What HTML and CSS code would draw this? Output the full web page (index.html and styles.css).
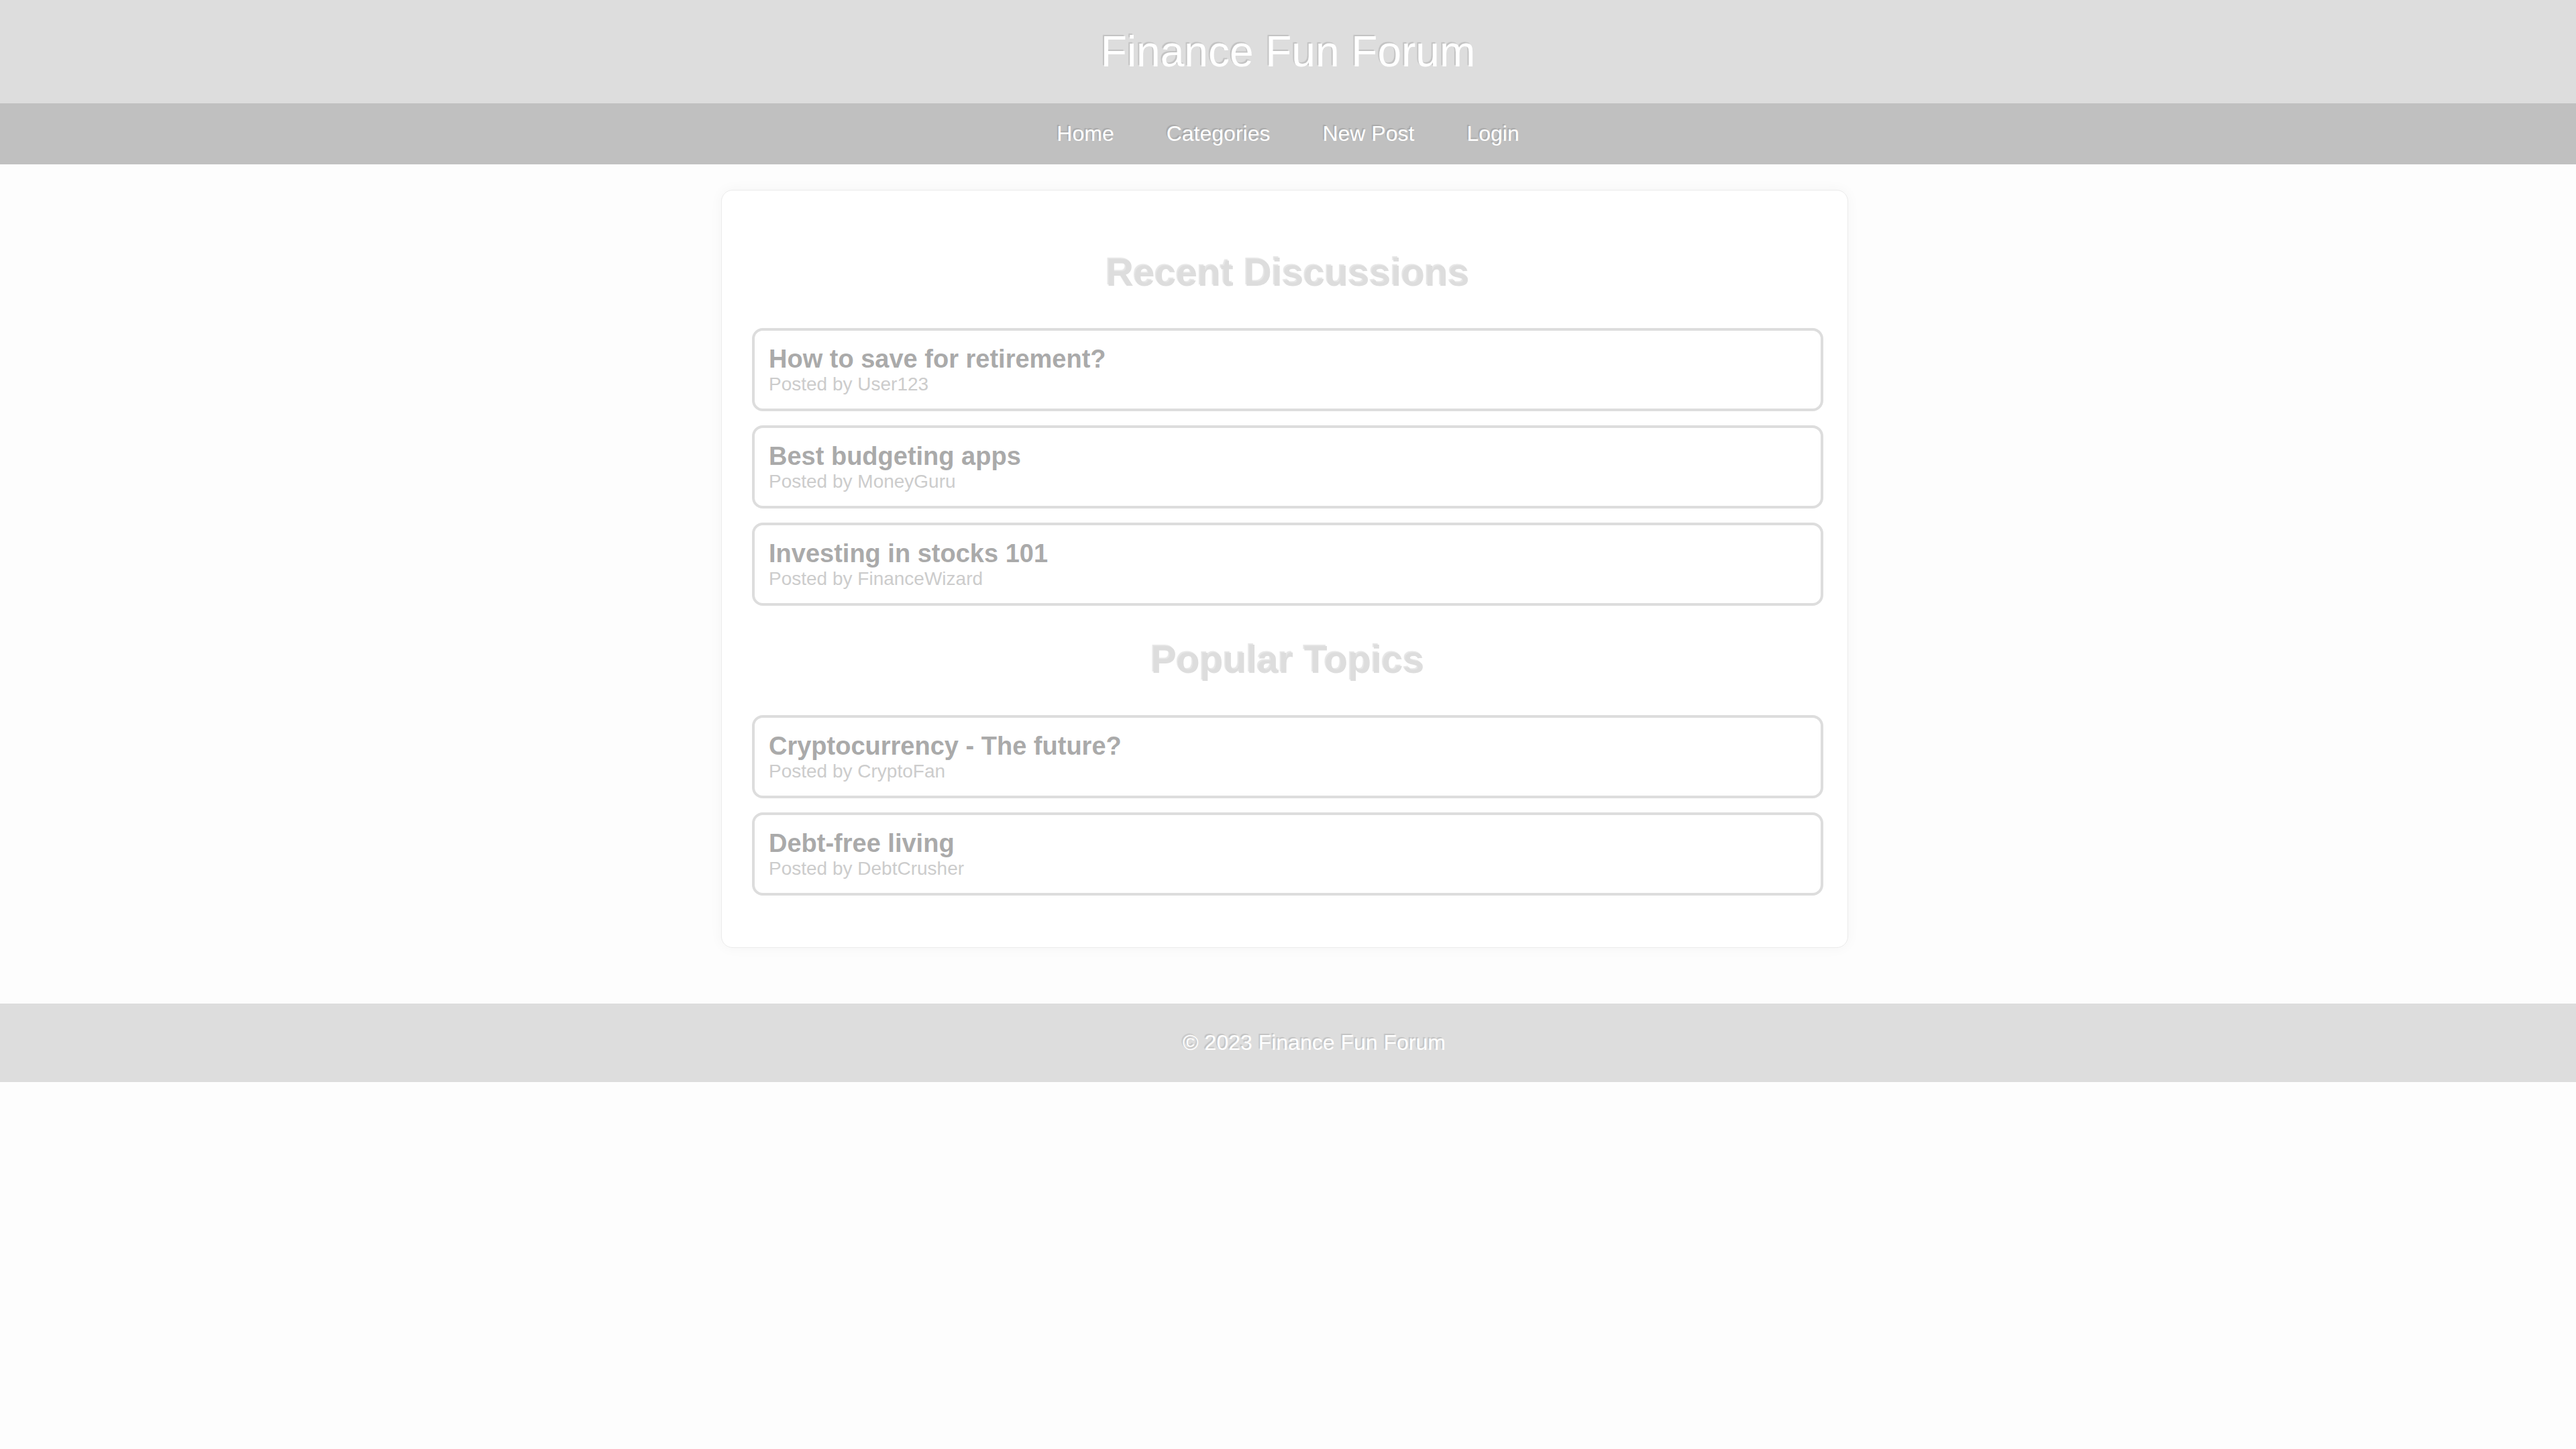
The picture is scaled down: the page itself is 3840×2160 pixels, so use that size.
FILE: index.html
```html
<!DOCTYPE html>
<html lang="en">
<head>
    <meta charset="utf-8">
    <title>Finance Fun Forum</title>
    <link rel="stylesheet" href="styles.css">
</head>
<body>
    <header class="site-header">
        <h1 class="site-title">Finance Fun Forum</h1>
    </header>

    <nav class="main-nav">
        <a class="nav-link" href="#">Home</a>
        <a class="nav-link" href="#">Categories</a>
        <a class="nav-link" href="#">New Post</a>
        <a class="nav-link" href="#">Login</a>
    </nav>

    <div class="content">
        <div class="card">
            <section class="section">
                <h2 class="section-title">Recent Discussions</h2>
                <div class="post-list">
                    <div class="post">
                        <div class="post-title">How to save for retirement?</div>
                        <div class="post-meta">Posted by User123</div>
                    </div>
                    <div class="post">
                        <div class="post-title">Best budgeting apps</div>
                        <div class="post-meta">Posted by MoneyGuru</div>
                    </div>
                    <div class="post">
                        <div class="post-title">Investing in stocks 101</div>
                        <div class="post-meta">Posted by FinanceWizard</div>
                    </div>
                </div>
            </section>

            <section class="section">
                <h2 class="section-title">Popular Topics</h2>
                <div class="post-list">
                    <div class="post">
                        <div class="post-title">Cryptocurrency - The future?</div>
                        <div class="post-meta">Posted by CryptoFan</div>
                    </div>
                    <div class="post">
                        <div class="post-title">Debt-free living</div>
                        <div class="post-meta">Posted by DebtCrusher</div>
                    </div>
                </div>
            </section>
        </div>
    </div>

    <footer class="site-footer">
        &copy; 2023 Finance Fun Forum
    </footer>
</body>
</html>
```

FILE: styles.css
```css
* {
    margin: 0;
    padding: 0;
    box-sizing: border-box;
}

body {
    font-family: "Liberation Sans", Arial, sans-serif;
    background: #fdfdfd;
}

.site-header {
    background: #dddddd;
    padding: 40px 0;
    text-align: center;
}

.site-title {
    color: #ffffff;
    font-size: 64px;
    font-weight: normal;
    line-height: 74px;
    text-shadow: -2px -2px 1px rgba(0, 0, 0, 0.12);
}

.main-nav {
    background: #c0c0c0;
    padding: 27px 0;
    display: flex;
    justify-content: center;
    gap: 78px;
}

.nav-link {
    color: #ffffff;
    text-decoration: none;
    font-size: 32px;
    line-height: 37px;
    text-shadow: -2px -2px 1px rgba(0, 0, 0, 0.12);
}

.content {
    padding: 38px 10px 83px 0;
}

.card {
    width: 1680px;
    margin: 0 auto;
    background: #ffffff;
    border: 1px solid #ebebeb;
    border-radius: 17px;
    box-shadow: 0 0 20px rgba(0, 0, 0, 0.04);
    padding: 90px 36px 77px 45px;
}

.section + .section {
    margin-top: 48px;
}

.section-title {
    text-align: center;
    color: #dddddd;
    font-size: 57px;
    line-height: 65px;
    margin-bottom: 50px;
    text-shadow: -2px -2px 1px rgba(0, 0, 0, 0.1);
}

.post-list {
    display: flex;
    flex-direction: column;
    gap: 21px;
}

.post {
    border: 4px solid #dddddd;
    border-radius: 16px;
    padding: 20px 21px 19px;
    height: 124px;
}

.post-title {
    color: #aaaaaa;
    font-size: 38px;
    font-weight: bold;
    line-height: 44px;
}

.post-meta {
    color: #cccccc;
    font-size: 28px;
    line-height: 32px;
}

.site-footer {
    background: #dddddd;
    color: #ffffff;
    text-align: center;
    font-size: 32px;
    line-height: 37px;
    padding: 40px 0 40px 78px;
    text-shadow: -2px -2px 1px rgba(0, 0, 0, 0.12);
}
```
